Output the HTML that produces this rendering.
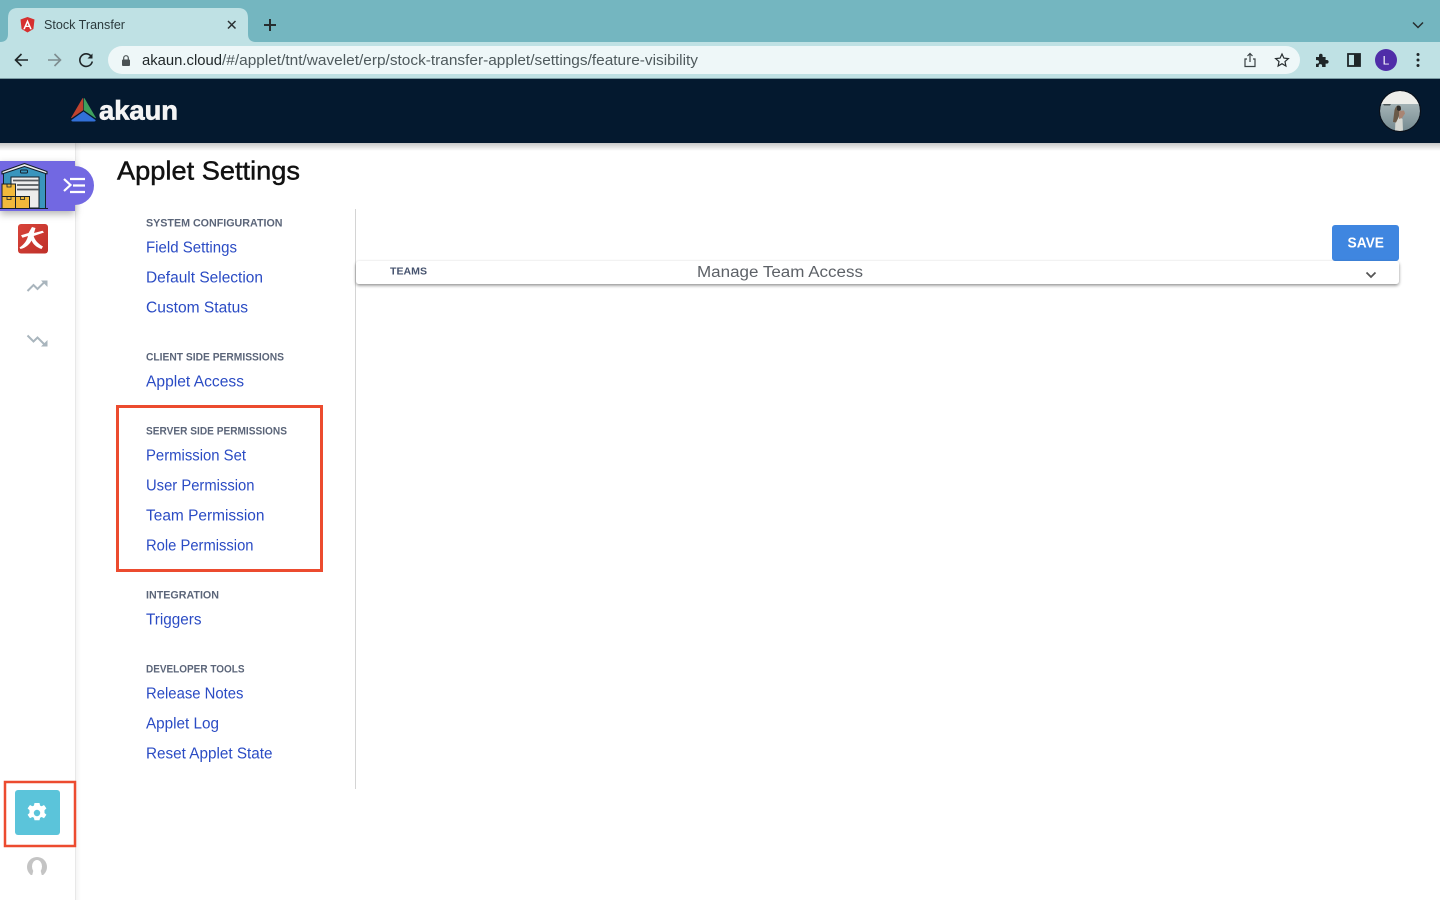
<!DOCTYPE html>
<html lang="en"><head><meta charset="utf-8"><title>Stock Transfer</title>
<style>
html,body{margin:0;padding:0;width:1440px;height:900px;overflow:hidden;background:#fff}
svg{display:block}
text{font-family:"Liberation Sans",sans-serif}
.h{font-size:11px;font-weight:700;fill:#5b6579}
.l{font-size:15.5px;fill:#2a4bc4}
</style></head><body>
<svg width="1440" height="900" viewBox="0 0 1440 900" xmlns="http://www.w3.org/2000/svg">
<defs>
<linearGradient id="sh" x1="0" y1="0" x2="0" y2="1"><stop offset="0" stop-color="#000" stop-opacity=".22"/><stop offset="1" stop-color="#000" stop-opacity="0"/></linearGradient>
<linearGradient id="sd" x1="0" y1="0" x2="1" y2="0"><stop offset="0" stop-color="#000" stop-opacity=".05"/><stop offset="1" stop-color="#000" stop-opacity="0"/></linearGradient>
<linearGradient id="sea" x1="0" y1="0" x2="0" y2="1"><stop offset="0" stop-color="#a4b3b6"/><stop offset="1" stop-color="#74898f"/></linearGradient>
<linearGradient id="red" x1="0" y1="0" x2="1" y2="1"><stop offset="0" stop-color="#d8443a"/><stop offset="1" stop-color="#bf3029"/></linearGradient>
<filter id="s1" x="-5%" y="-50%" width="110%" height="220%"><feDropShadow dx="0" dy="1.5" stdDeviation="1.5" flood-color="#000" flood-opacity=".45"/></filter>
<filter id="s2" x="-20%" y="-30%" width="140%" height="170%"><feDropShadow dx="0" dy="3" stdDeviation="4" flood-color="#000" flood-opacity=".3"/></filter>
<clipPath id="av"><circle cx="1400" cy="111" r="20"/></clipPath>
<clipPath id="usr"><rect x="25" y="855" width="24" height="20"/></clipPath>
</defs>

<!-- main background -->
<rect width="1440" height="900" fill="#fff"/>
<rect x="75" y="143" width="6" height="757" fill="url(#sd)"/>
<rect x="75" y="143" width="1" height="757" fill="#e8e8e8"/>

<!-- browser chrome -->
<rect width="1440" height="42" fill="#74b6c0"/>
<rect y="42" width="1440" height="36" fill="#bfe1e4"/>
<path d="M0 42Q8 42 8 34V18Q8 8 18 8H238Q248 8 248 18V34Q248 42 256 42Z" fill="#bfe1e4"/>
<path d="M27.500 17l-7 2.500 1.100 9.500 5.900 3.500 5.900-3.500 1.100-9.500z" fill="#d6302f"/>
<path d="M27.500 19.500l-4.300 9.800h1.700l.9-2.300h3.400l.9 2.300h1.700zM26.500 25.700l1-2.700 1 2.700z" fill="#fff"/>
<text x="44" y="29" font-size="12.500" fill="#2b3a3d" textLength="81" lengthAdjust="spacingAndGlyphs">Stock Transfer</text>
<path d="M228 21l7.500 7.500M235.500 21l-7.500 7.500" stroke="#2a3133" stroke-width="1.500" fill="none"/>
<path d="M270 19v12M264 25h12" stroke="#262d2f" stroke-width="2" fill="none"/>
<path d="M1413 22.500l5 5 5-5" stroke="#262d2f" stroke-width="1.500" fill="none"/>

<path d="M28 60H16M21.500 54l-6 6 6 6" stroke="#1f2628" stroke-width="1.600" fill="none"/>
<path d="M48 60H60M54.500 54l6 6-6 6" stroke="#7d8c8f" stroke-width="1.600" fill="none"/>
<path d="M91.300 56.500A6.300 6.300 0 1 0 92.300 61.500" stroke="#1f2628" stroke-width="1.600" fill="none"/>
<path d="M92.500 53.500v5h-5z" fill="#1f2628"/>

<rect x="108" y="46" width="1192" height="28" rx="14" fill="#eef7f8"/>
<rect x="122" y="59.500" width="8" height="6.500" rx="1" fill="#4a5254"/>
<path d="M123.700 60v-2a2.300 2.300 0 0 1 4.600 0v2" stroke="#4a5254" stroke-width="1.200" fill="none"/>
<text x="142" y="65" font-size="14.500" fill="#1f2628" textLength="80" lengthAdjust="spacingAndGlyphs">akaun.cloud</text>
<text x="222" y="65" font-size="14.500" fill="#4f5a5d" textLength="476" lengthAdjust="spacingAndGlyphs">/#/applet/tnt/wavelet/erp/stock-transfer-applet/settings/feature-visibility</text>

<path d="M1247 59h-2v7.500h10V59h-2" stroke="#3a4346" stroke-width="1.200" fill="none"/>
<path d="M1250 62V54M1247.500 56l2.500-2.500 2.500 2.500" stroke="#3a4346" stroke-width="1.200" fill="none"/>
<path d="M1282 54l1.900 4.100 4.500.5-3.400 3 .9 4.400-3.900-2.300-3.900 2.300.9-4.400-3.400-3 4.500-.5z" stroke="#262d2f" stroke-width="1.200" fill="none"/>
<path d="M1316 57h3v-1.500a1.800 1.800 0 0 1 3.600 0V57h3v3h1.200a1.800 1.800 0 0 1 0 3.600H1325.600V67h-3.500v-1.200a1.700 1.700 0 0 0-3.400 0V67H1316v-3.300h1.200a1.800 1.800 0 0 0 0-3.600H1316z" fill="#1f2628"/>
<rect x="1348" y="54" width="12" height="12" fill="none" stroke="#1f2628" stroke-width="1.800"/>
<rect x="1354" y="54" width="6" height="12" fill="#1f2628"/>
<circle cx="1386" cy="60" r="11" fill="#4f2da8"/>
<text x="1386" y="64.500" font-size="12" fill="#fff" text-anchor="middle">L</text>
<circle cx="1418" cy="54.500" r="1.500" fill="#1f2628"/><circle cx="1418" cy="60" r="1.500" fill="#1f2628"/><circle cx="1418" cy="65.500" r="1.500" fill="#1f2628"/>
<rect y="78" width="1440" height="1" fill="#7b9ba3"/>

<!-- app header -->
<rect y="79" width="1440" height="64" fill="#04192f"/>
<rect y="143" width="1440" height="8" fill="url(#sh)"/>
<path d="M82.800 98.500L71.500 117.800 82.800 110z" fill="#c0432f" stroke="#c0432f" stroke-width=".8" stroke-linejoin="round"/>
<path d="M84.200 98.500L95.500 117.800 84.200 110z" fill="#3fa05d" stroke="#3fa05d" stroke-width=".8" stroke-linejoin="round"/>
<path d="M83.500 111.500L95.500 120Q96 121.500 94 121.500H73Q71 121.500 71.500 120Z" fill="#3270d8"/>
<text x="99" y="119.500" font-size="27" font-weight="700" fill="#f4f4f4" textLength="79" lengthAdjust="spacingAndGlyphs" stroke="#f4f4f4" stroke-width=".7">akaun</text>

<!-- avatar -->
<g clip-path="url(#av)">
<rect x="1380" y="91" width="40" height="14" fill="#eeeeea"/>
<rect x="1380" y="104" width="40" height="28" fill="url(#sea)"/>
<path d="M1383 104h8l-1 1.500h-6z" fill="#4a5557"/>
<path d="M1395 131l.5-12 4-2 3 2 .5 12z" fill="#d6d8d2"/>
<path d="M1393 122l1.500-12q1.500-5 4.500-4.500 2 .5 2 3l-1 4-2 6-2 4z" fill="#6a5a48"/>
<path d="M1397 106q2-1 3.500.5l.5 3-2 1.500-2-1z" fill="#2e2c2a"/>
<path d="M1399 111l5-.5 1 3-3 4.500-3 1z" fill="#a98573"/>
</g>
<circle cx="1400" cy="111" r="20.500" fill="none" stroke="#0a0f18" stroke-width="1"/>

<!-- sidebar -->
<rect x="0" y="161" width="75" height="50" fill="#7268e2" filter="url(#s2)"/>
<path d="M70 166h5a19 19.500 0 0 1 0 39h-5z" fill="#7268e2"/>
<path d="M64 179l6.500 6-6.500 6" stroke="#fff" stroke-width="2.200" fill="none"/>
<path d="M70 179h15M73 185.500h12M70 192h15" stroke="#fff" stroke-width="2.200" fill="none"/>

<!-- warehouse -->
<path d="M3 172.500L24.500 165.500 46 172.500V208H3Z" fill="#3a95bd"/>
<path d="M2 174V171.500L24.500 163.500 47 171.500V174L24.500 166.500Z" fill="#eee" stroke="#15202b" stroke-width="1.100" stroke-linejoin="round"/>
<path d="M3.500 174V208M45.500 174V208" stroke="#15202b" stroke-width="1"/>
<rect x="20.500" y="170" width="7" height="3" rx="1" fill="#3a95bd" stroke="#15202b" stroke-width="1"/>
<rect x="11" y="177" width="28" height="31" fill="#ececec" stroke="#15202b" stroke-width="1"/>
<path d="M13 180.500h26M17 185h22M17 189.500h22" stroke="#55595d" stroke-width="1.800"/>
<rect x="2" y="184" width="13.500" height="12.500" fill="#f1b93c" stroke="#15202b" stroke-width="1"/>
<rect x="2" y="196.500" width="13.500" height="12" fill="#f1b93c" stroke="#15202b" stroke-width="1"/>
<rect x="15.500" y="196.500" width="14" height="12" fill="#f1b93c" stroke="#15202b" stroke-width="1"/>
<path d="M7 184v3h4v-3M7 196.500v3h4v-3M20.500 196.500v3h4v-3" fill="none" stroke="#15202b" stroke-width=".8"/>
<path d="M0 208.500H48" stroke="#15202b" stroke-width="1"/>

<!-- red app icon -->
<rect x="18" y="224" width="30" height="29.500" rx="3" fill="url(#red)"/>
<path d="M32 227l3.500 1-1.500 5 8.500-2.300 1.500 1.800-10.300 3.500c1 4 4 7.500 9.300 10.500l-1.500 2.500c-5-1.500-8.500-5-10-8.500-2 4-6 7.500-11 8.500l-1-1.500c4.500-3 7.500-7 8.500-11.500l-5.500 1.800-1.500-2.500 7.500-2.300z" fill="#fff"/>

<!-- trend icons -->
<path d="M27.500 291l6-6 4 4 7.500-7.500" stroke="#a9b5bd" stroke-width="2" fill="none"/>
<path d="M41 280.500h6.500v6.500z" fill="#a9b5bd"/>
<path d="M27.500 335.500l6 6 4-4 7.500 7.500" stroke="#a9b5bd" stroke-width="2" fill="none"/>
<path d="M41 346.500h6.500V340z" fill="#a9b5bd"/>

<!-- settings -->
<rect x="15" y="790" width="45" height="45" rx="3" fill="#5bc4da"/>
<path d="M34.500 803h5l.6 2.600 1.600.7 2.300-1.300 2.400 3.400-1.900 1.800v2.800l1.900 1.800-2.400 3.500-2.300-1.300-1.600.7-.6 2.500h-5l-.6-2.500-1.600-.7-2.300 1.300-2.400-3.500 1.900-1.800v-2.800l-1.900-1.800 2.400-3.400 2.300 1.300 1.600-.7z" fill="#fff"/>
<circle cx="37" cy="813" r="3.200" fill="#5bc4da"/>
<rect x="5" y="782" width="70" height="64" fill="none" stroke="#ec4b2f" stroke-width="2.500"/>
<g clip-path="url(#usr)">
<circle cx="37" cy="867" r="10" fill="#c4c4c4"/>
<ellipse cx="37" cy="866.500" rx="5" ry="6.500" fill="#fff"/>
<path d="M33.500 870h7l1.500 6h-10z" fill="#fff"/>
</g>

<!-- title -->
<text x="117" y="179.500" font-size="26" fill="#111" stroke="#111" stroke-width=".45" textLength="183" lengthAdjust="spacingAndGlyphs">Applet Settings</text>

<!-- settings nav -->
<text class="h" x="146" y="226.500" textLength="136.500" lengthAdjust="spacingAndGlyphs">SYSTEM CONFIGURATION</text>
<text class="l" x="146" y="252.500" textLength="91" lengthAdjust="spacingAndGlyphs">Field Settings</text>
<text class="l" x="146" y="282.500" textLength="117" lengthAdjust="spacingAndGlyphs">Default Selection</text>
<text class="l" x="146" y="312.500" textLength="102" lengthAdjust="spacingAndGlyphs">Custom Status</text>

<text class="h" x="146" y="360.500" textLength="138" lengthAdjust="spacingAndGlyphs">CLIENT SIDE PERMISSIONS</text>
<text class="l" x="146" y="386.500" textLength="98" lengthAdjust="spacingAndGlyphs">Applet Access</text>

<text class="h" x="146" y="434.500" textLength="141" lengthAdjust="spacingAndGlyphs">SERVER SIDE PERMISSIONS</text>
<text class="l" x="146" y="460.500" textLength="100" lengthAdjust="spacingAndGlyphs">Permission Set</text>
<text class="l" x="146" y="490.500" textLength="108.500" lengthAdjust="spacingAndGlyphs">User Permission</text>
<text class="l" x="146" y="520.500" textLength="118.500" lengthAdjust="spacingAndGlyphs">Team Permission</text>
<text class="l" x="146" y="550.500" textLength="107.500" lengthAdjust="spacingAndGlyphs">Role Permission</text>
<rect x="117.500" y="406.500" width="204" height="164" fill="none" stroke="#ec4b2f" stroke-width="3"/>

<text class="h" x="146" y="598.500" textLength="73" lengthAdjust="spacingAndGlyphs">INTEGRATION</text>
<text class="l" x="146" y="624.500" textLength="55.500" lengthAdjust="spacingAndGlyphs">Triggers</text>

<text class="h" x="146" y="672.500" textLength="98.500" lengthAdjust="spacingAndGlyphs">DEVELOPER TOOLS</text>
<text class="l" x="146" y="698.500" textLength="97.500" lengthAdjust="spacingAndGlyphs">Release Notes</text>
<text class="l" x="146" y="728.500" textLength="73" lengthAdjust="spacingAndGlyphs">Applet Log</text>
<text class="l" x="146" y="758.500" textLength="126.500" lengthAdjust="spacingAndGlyphs">Reset Applet State</text>

<rect x="355" y="209" width="1" height="580" fill="#d4d4d4"/>

<!-- save -->
<rect x="1332" y="225" width="67" height="36" rx="3" fill="#3f86e0"/>
<text x="1347.500" y="247.500" font-size="14.500" font-weight="700" fill="#fff" textLength="36.500" lengthAdjust="spacingAndGlyphs">SAVE</text>

<!-- panel -->
<rect x="356" y="261" width="1043" height="23" rx="3" fill="#fff" filter="url(#s1)"/>
<text x="390" y="274.500" font-size="10.500" font-weight="700" fill="#46536e" textLength="37" lengthAdjust="spacingAndGlyphs">TEAMS</text>
<text x="697" y="277" font-size="15.500" fill="#5d6167" textLength="166" lengthAdjust="spacingAndGlyphs">Manage Team Access</text>
<path d="M1366.500 272.500l4.500 4.500 4.500-4.500" stroke="#555" stroke-width="1.800" fill="none"/>
</svg>
</body></html>
